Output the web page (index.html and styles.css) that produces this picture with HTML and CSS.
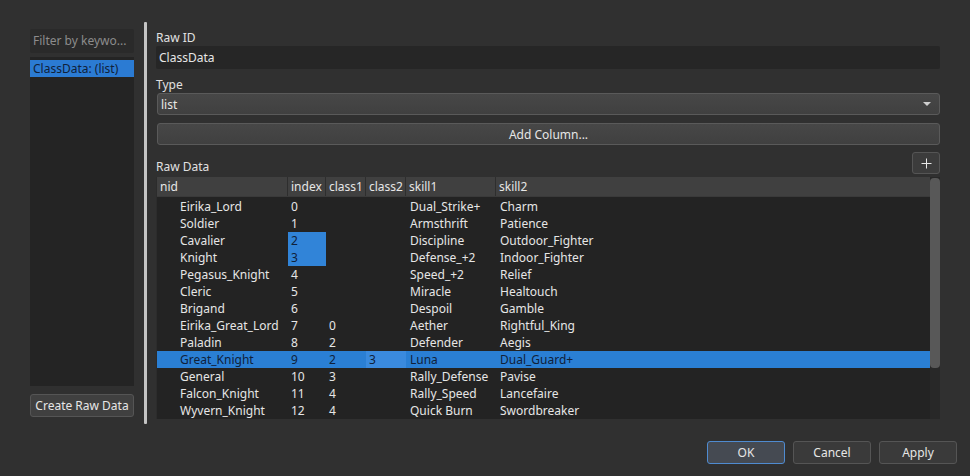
FILE: index.html
```html
<!DOCTYPE html>
<html>
<head>
<meta charset="utf-8">
<link rel="stylesheet" href="styles.css">
</head>
<body>
<div class="window">
  <div class="main">
    <div class="left">
      <div class="filter">Filter by keywo...</div>
      <div class="list">
        <div class="list-item selected">ClassData: (list)</div>
      </div>
      <button class="btn create">Create Raw Data</button>
    </div>
    <div class="splitter"></div>
    <div class="right">
      <div class="label">Raw ID</div>
      <div class="input">ClassData</div>
      <div class="label type-label">Type</div>
      <div class="combo"><span>list</span><span class="arrow"></span></div>
      <button class="btn wide">Add Column...</button>
      <div class="raw-head">
        <div class="label">Raw Data</div>
        <button class="btn plus">
          <svg width="11" height="11" viewBox="0 0 11 11"><path d="M5.5 0.5v10M0.5 5.5h10" stroke="#e8e8e8" stroke-width="1"/></svg>
        </button>
      </div>
      <div class="table">
        <div class="grid">
          <div class="hrow">
            <div class="h c0">nid</div><div class="h c1">index</div><div class="h c2">class1</div><div class="h c3">class2</div><div class="h c4">skill1</div><div class="h c5">skill2</div>
          </div>
          <div class="row"><div class="c0 nid">Eirika_Lord</div><div class="c1">0</div><div class="c2"></div><div class="c3"></div><div class="c4">Dual_Strike+</div><div class="c5">Charm</div></div>
          <div class="row"><div class="c0 nid">Soldier</div><div class="c1">1</div><div class="c2"></div><div class="c3"></div><div class="c4">Armsthrift</div><div class="c5">Patience</div></div>
          <div class="row"><div class="c0 nid">Cavalier</div><div class="c1 sel">2</div><div class="c2"></div><div class="c3"></div><div class="c4">Discipline</div><div class="c5">Outdoor_Fighter</div></div>
          <div class="row"><div class="c0 nid">Knight</div><div class="c1 sel">3</div><div class="c2"></div><div class="c3"></div><div class="c4">Defense_+2</div><div class="c5">Indoor_Fighter</div></div>
          <div class="row"><div class="c0 nid">Pegasus_Knight</div><div class="c1">4</div><div class="c2"></div><div class="c3"></div><div class="c4">Speed_+2</div><div class="c5">Relief</div></div>
          <div class="row"><div class="c0 nid">Cleric</div><div class="c1">5</div><div class="c2"></div><div class="c3"></div><div class="c4">Miracle</div><div class="c5">Healtouch</div></div>
          <div class="row"><div class="c0 nid">Brigand</div><div class="c1">6</div><div class="c2"></div><div class="c3"></div><div class="c4">Despoil</div><div class="c5">Gamble</div></div>
          <div class="row"><div class="c0 nid">Eirika_Great_Lord</div><div class="c1">7</div><div class="c2">0</div><div class="c3"></div><div class="c4">Aether</div><div class="c5">Rightful_King</div></div>
          <div class="row"><div class="c0 nid">Paladin</div><div class="c1">8</div><div class="c2">2</div><div class="c3"></div><div class="c4">Defender</div><div class="c5">Aegis</div></div>
          <div class="row active"><div class="c0 nid">Great_Knight</div><div class="c1">9</div><div class="c2">2</div><div class="c3 cur">3</div><div class="c4">Luna</div><div class="c5">Dual_Guard+</div></div>
          <div class="row"><div class="c0 nid">General</div><div class="c1">10</div><div class="c2">3</div><div class="c3"></div><div class="c4">Rally_Defense</div><div class="c5">Pavise</div></div>
          <div class="row"><div class="c0 nid">Falcon_Knight</div><div class="c1">11</div><div class="c2">4</div><div class="c3"></div><div class="c4">Rally_Speed</div><div class="c5">Lancefaire</div></div>
          <div class="row"><div class="c0 nid">Wyvern_Knight</div><div class="c1">12</div><div class="c2">4</div><div class="c3"></div><div class="c4">Quick Burn</div><div class="c5">Swordbreaker</div></div>
        </div>
        <div class="vscroll"><div class="handle"></div></div>
      </div>
    </div>
  </div>
  <div class="footer">
    <button class="btn foot ok">OK</button>
    <button class="btn foot">Cancel</button>
    <button class="btn foot">Apply</button>
  </div>
</div>
</body>
</html>
```

FILE: styles.css
```css
* { box-sizing: border-box; }
html, body {
  margin: 0;
  padding: 0;
  background: #303030;
  width: 970px;
  height: 476px;
  overflow: hidden;
  font-family: "Noto Sans", "Open Sans", sans-serif;
  font-size: 12px;
  color: #e6e6e6;
}
.window {
  width: 970px;
  height: 476px;
  display: flex;
  flex-direction: column;
}
.main {
  display: flex;
  padding: 22px 0 0 30px;
  height: 424px;
}
.left {
  width: 104px;
  margin-top: 7px;
  display: flex;
  flex-direction: column;
  height: 388px;
}
.filter {
  height: 24px;
  background: #2a2a2a;
  border-radius: 2px;
  color: #8c8c8c;
  padding: 0 3px;
  line-height: 24px;
  white-space: nowrap;
  overflow: hidden;
}
.list {
  margin-top: 4px;
  flex: 1;
  background: #242424;
  padding-top: 3px;
}
.list-item {
  height: 17px;
  line-height: 17px;
  padding-left: 3px;
  white-space: nowrap;
}
.list-item.selected {
  background: #2b7bd3;
  color: #10213a;
}
.btn {
  font-family: inherit;
  font-size: 12px;
  color: #e6e6e6;
  background: #3e3e3e;
  border: 1px solid #555;
  border-radius: 3px;
  padding: 0;
  margin: 0;
}
.create {
  margin-top: 8px;
  height: 23px;
  width: 104px;
  background: #404040;
}
.splitter {
  width: 3px;
  margin-left: 10px;
  height: 402px;
  background: #c4c4c4;
  border-radius: 1px;
}
.right {
  margin-left: 9px;
  width: 784px;
  padding-top: 8px;
  display: flex;
  flex-direction: column;
}
.label {
  height: 16px;
  line-height: 16px;
  color: #e0e0e0;
}
.input {
  margin-top: 0;
  height: 23px;
  line-height: 23px;
  background: #262626;
  border-radius: 2px;
  padding-left: 3px;
}
.type-label { margin-top: 8px; }
.combo {
  margin-left: 1px;
  height: 22px;
  background: linear-gradient(#474747, #404040);
  border: 1px solid #5a5a5a;
  border-radius: 3px;
  display: flex;
  align-items: center;
  justify-content: space-between;
  padding: 0 8px 0 3px;
}
.arrow {
  width: 0; height: 0;
  border-left: 4px solid transparent;
  border-right: 4px solid transparent;
  border-top: 4px solid #cfcfcf;
}
.wide {
  margin: 8px 0 0 1px;
  height: 22px;
  width: 783px;
  background: linear-gradient(#474747, #404040);
  border-color: #5a5a5a;
}
.raw-head {
  margin-top: 7px;
  height: 22px;
  display: flex;
  justify-content: space-between;
  align-items: flex-end;
}
.raw-head .label { height: 16px; margin-bottom: -1px; }
.plus {
  width: 28px;
  height: 22px;
  display: flex;
  align-items: center;
  justify-content: center;
  background: #3c3c3c;
}
.table {
  margin-top: 3px;
  height: 242px;
  background: #232323;
  display: flex;
  overflow: hidden;
  border-left: 1px solid #2c2c2c;
}
.grid { flex: 1; }
.hrow {
  display: flex;
  height: 20px;
  background: #404040;
  border-bottom: 1px solid #3a3a3a;
  margin-bottom: 1px;
}
.h {
  line-height: 19px;
  padding-left: 3px;
  border-right: 1px solid #2e2e2e;
  white-space: nowrap;
  overflow: hidden;
}
.h.c5 { border-right: none; }
.row {
  display: flex;
  height: 17px;
  line-height: 17px;
}
.row > div {
  padding-left: 3px;
  white-space: nowrap;
  overflow: hidden;
}
.row > .c4, .row > .c5 { padding-left: 4px; }
.c0 { width: 131px; }
.c1 { width: 38px; }
.c2 { width: 40px; }
.c3 { width: 40px; }
.c4 { width: 90px; }
.c5 { flex: 1; }
.row .nid { padding-left: 23px; }
.row .sel { background: #3184d8; color: #10213a; }
.row.active { background: #2a7fd4; color: #10213a; }
.row.active .cur { background: #3a8ade; }
.vscroll {
  width: 10px;
  background: #282828;
  padding-top: 1px;
}
.handle {
  width: 10px;
  height: 190px;
  background: #585858;
  border-radius: 4px;
}
.footer {
  display: flex;
  justify-content: flex-end;
  gap: 8px;
  padding: 17px 13px 0 0;
}
.foot {
  width: 78px;
  height: 23px;
  background: #3a3a3a;
}
.ok {
  background: #454a52;
  border-color: #4f8bd0;
}
```
